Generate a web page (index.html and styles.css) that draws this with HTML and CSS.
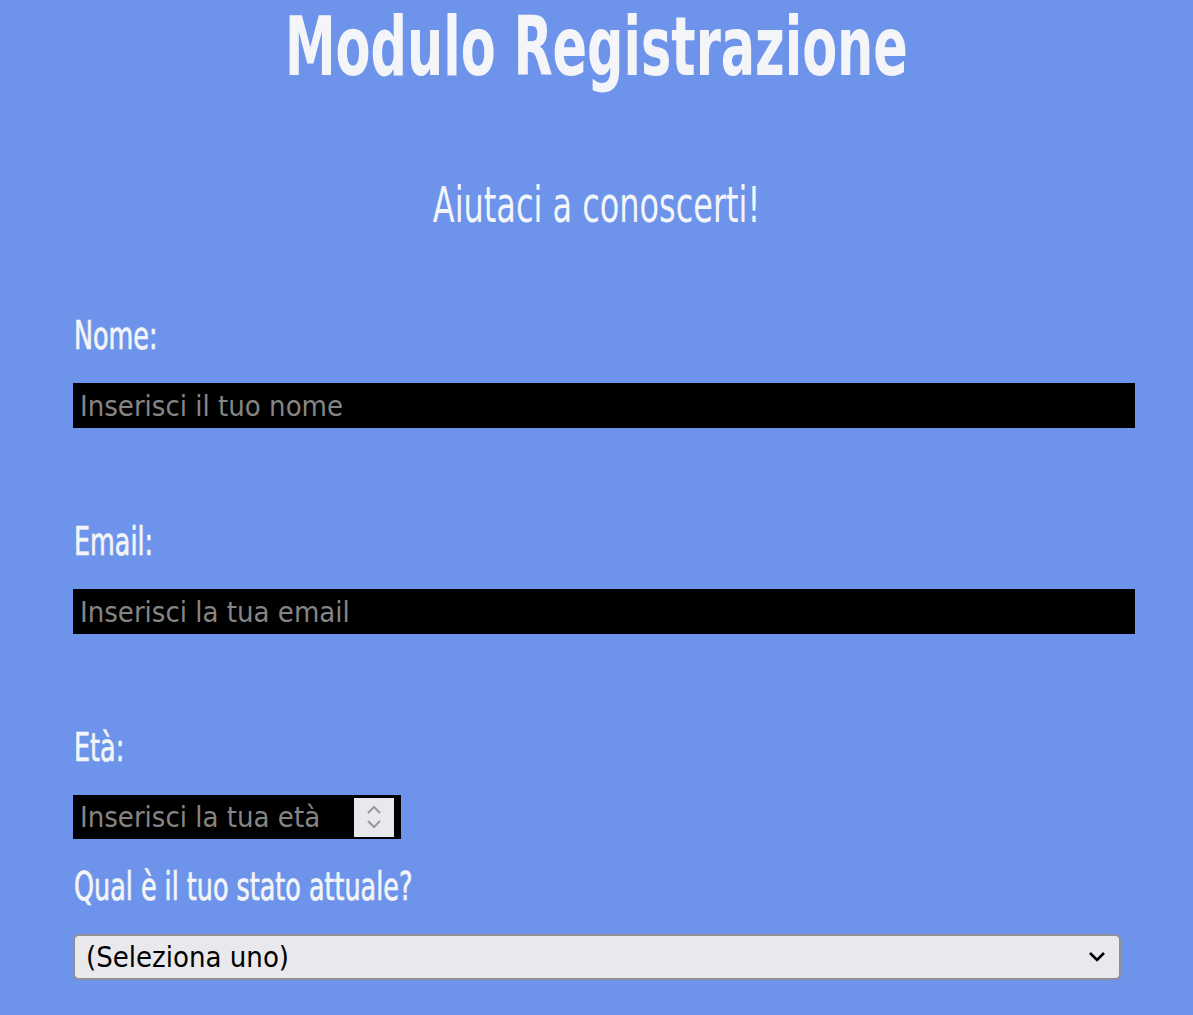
FILE: index.html
```html
<!DOCTYPE html>
<html lang="it">
<head>
<meta charset="utf-8">
<title>Modulo Registrazione</title>
<link rel="stylesheet" href="styles.css">
</head>
<body>
<h1 class="title"><span class="narrow-c">Modulo Registrazione</span></h1>
<p class="subtitle"><span class="narrow-c">Aiutaci a conoscerti!</span></p>
<form class="form">
  <div class="field">
    <label class="label" for="nome"><span class="narrow-l">Nome:</span></label>
    <input class="input" id="nome" type="text" placeholder="Inserisci il tuo nome">
  </div>
  <div class="field">
    <label class="label" for="email"><span class="narrow-l">Email:</span></label>
    <input class="input" id="email" type="email" placeholder="Inserisci la tua email">
  </div>
  <div class="field field-age">
    <label class="label" for="eta"><span class="narrow-l">Età:</span></label>
    <div class="number" id="eta">
      <span class="number-text">Inserisci la tua età</span>
      <span class="spinner">
        <svg width="18" height="30" viewBox="0 0 18 30"><path d="M3 11 L9 5 L15 11" fill="none" stroke="#99969f" stroke-width="2"/><path d="M3 19 L9 25 L15 19" fill="none" stroke="#99969f" stroke-width="2"/></svg>
      </span>
    </div>
  </div>
  <div class="field field-last">
    <label class="label" for="stato"><span class="narrow-l">Qual è il tuo stato attuale?</span></label>
    <div class="select" id="stato">
      <span class="select-text">(Seleziona uno)</span>
      <svg class="chev" width="18" height="12" viewBox="0 0 18 12"><path d="M2 2 L9 9 L16 2" fill="none" stroke="#000" stroke-width="2.6"/></svg>
    </div>
  </div>
</form>
</body>
</html>
```
FILE: styles.css
```css
html, body {
  margin: 0;
  padding: 0;
}
body {
  background: #6d94ea;
  color: #f4f5f8;
  font-family: "DejaVu Sans Condensed", "DejaVu Sans", sans-serif;
  height: 1015px;
  overflow: hidden;
}
.narrow-c {
  display: inline-block;
  transform-origin: center;
}
.narrow-l {
  display: inline-block;
  transform: scaleX(0.725);
  transform-origin: left center;
  -webkit-text-stroke: 0.7px currentColor;
}
.title {
  margin: 0;
  padding-top: 6px;
  text-align: center;
  font-size: 82px;
  font-weight: bold;
  line-height: 82px;
}
.title .narrow-c {
  transform: scaleX(0.69);
}
.subtitle {
  margin: 92px 0 0;
  text-align: center;
  font-size: 50px;
  line-height: 50px;
}
.subtitle .narrow-c {
  transform: scaleX(0.71);
}
.form {
  padding: 0 58px 0 73px;
  margin-top: 84px;
}
.field {
  display: flex;
  flex-direction: column;
  align-items: flex-start;
  margin-bottom: 92px;
}
.field-age {
  margin-bottom: 26px;
}
.field-last {
  margin-bottom: 0;
}
.label {
  display: block;
  font-size: 39px;
  line-height: 44px;
  height: 44px;
  margin-bottom: 25px;
  padding-left: 1px;
  white-space: nowrap;
}
.input {
  box-sizing: border-box;
  width: 100%;
  height: 45px;
  border: none;
  background: #000;
  color: #fff;
  font-family: "DejaVu Sans Condensed", "DejaVu Sans", sans-serif;
  font-size: 29px;
  padding: 0 7px;
  outline: none;
}
.input::placeholder {
  color: #858585;
}
.number {
  box-sizing: border-box;
  width: 328px;
  height: 44px;
  background: #000;
  display: flex;
  align-items: center;
  justify-content: space-between;
  padding: 2px 7px 2px 7px;
}
.number-text {
  font-family: "DejaVu Sans Condensed", "DejaVu Sans", sans-serif;
  font-size: 29px;
  color: #858585;
}
.spinner {
  width: 40px;
  height: 39px;
  background: #e9e8ed;
  display: flex;
  align-items: center;
  justify-content: center;
}
.select {
  box-sizing: border-box;
  width: 1048px;
  height: 46px;
  background: #e9e8ec;
  border: 2px solid #8f8f95;
  border-radius: 6px;
  display: flex;
  align-items: center;
  justify-content: space-between;
  padding: 0 13px 0 11px;
}
.select-text {
  font-family: "DejaVu Sans Condensed", "DejaVu Sans", sans-serif;
  font-size: 29px;
  color: #000;
}
```
